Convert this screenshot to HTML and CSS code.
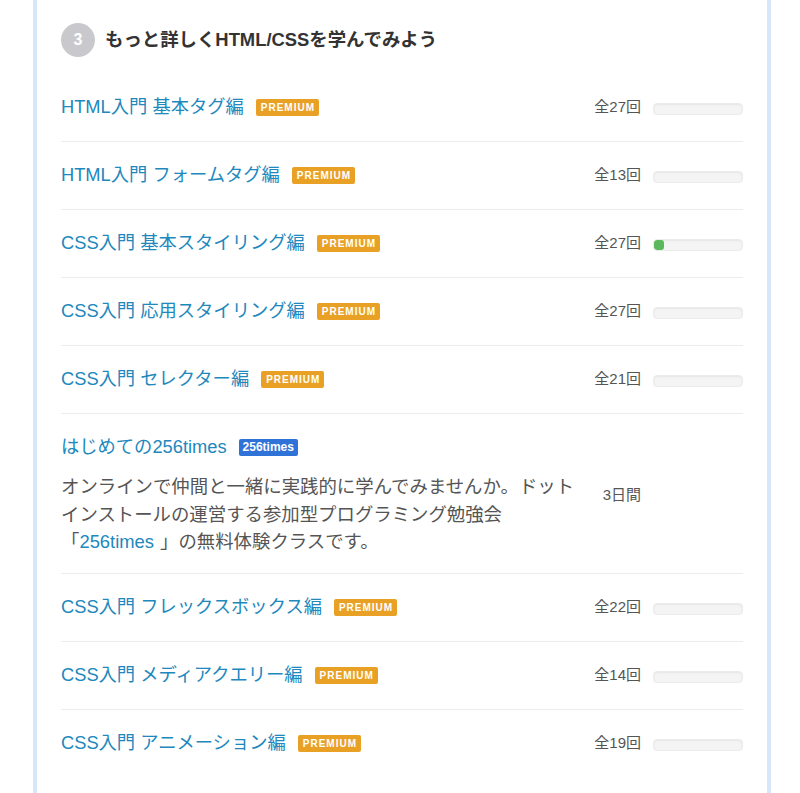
FILE: index.html
```html
<!DOCTYPE html>
<html lang="ja">
<head>
<meta charset="utf-8">
<title>もっと詳しくHTML/CSSを学んでみよう</title>
<link rel="stylesheet" href="styles.css">
</head>
<body>
<section class="course-card">
  <h2 class="step-heading"><span class="step-num">3</span><span class="step-title">もっと詳しくHTML/CSSを学んでみよう</span></h2>
  <ul class="lesson-list">
    <li class="lesson">
      <div class="lesson-main"><a class="lesson-title" href="#">HTML入門 基本タグ編</a><span class="badge badge-premium">PREMIUM</span></div>
      <div class="lesson-meta"><span class="count">全27回</span><span class="progress"></span></div>
    </li>
    <li class="lesson">
      <div class="lesson-main"><a class="lesson-title" href="#">HTML入門 フォームタグ編</a><span class="badge badge-premium">PREMIUM</span></div>
      <div class="lesson-meta"><span class="count">全13回</span><span class="progress"></span></div>
    </li>
    <li class="lesson">
      <div class="lesson-main"><a class="lesson-title" href="#">CSS入門 基本スタイリング編</a><span class="badge badge-premium">PREMIUM</span></div>
      <div class="lesson-meta"><span class="count">全27回</span><span class="progress"><span class="progress-fill" style="width: 10px"></span></span></div>
    </li>
    <li class="lesson">
      <div class="lesson-main"><a class="lesson-title" href="#">CSS入門 応用スタイリング編</a><span class="badge badge-premium">PREMIUM</span></div>
      <div class="lesson-meta"><span class="count">全27回</span><span class="progress"></span></div>
    </li>
    <li class="lesson">
      <div class="lesson-main"><a class="lesson-title" href="#">CSS入門 セレクター編</a><span class="badge badge-premium">PREMIUM</span></div>
      <div class="lesson-meta"><span class="count">全21回</span><span class="progress"></span></div>
    </li>
    <li class="lesson lesson-event">
      <div class="lesson-main">
        <div class="lesson-head"><a class="lesson-title" href="#">はじめての256times</a><span class="badge badge-event">256times</span></div>
        <p class="lesson-desc">オンラインで仲間と一緒に実践的に学んでみませんか。ドットインストールの運営する参加型プログラミング勉強会<span class="quoted">「<a class="desc-link" href="#">256times</a>」</span>の無料体験クラスです。</p>
      </div>
      <div class="lesson-meta"><span class="count">3日間</span><span class="progress-slot"></span></div>
    </li>
    <li class="lesson">
      <div class="lesson-main"><a class="lesson-title" href="#">CSS入門 フレックスボックス編</a><span class="badge badge-premium">PREMIUM</span></div>
      <div class="lesson-meta"><span class="count">全22回</span><span class="progress"></span></div>
    </li>
    <li class="lesson">
      <div class="lesson-main"><a class="lesson-title" href="#">CSS入門 メディアクエリー編</a><span class="badge badge-premium">PREMIUM</span></div>
      <div class="lesson-meta"><span class="count">全14回</span><span class="progress"></span></div>
    </li>
    <li class="lesson">
      <div class="lesson-main"><a class="lesson-title" href="#">CSS入門 アニメーション編</a><span class="badge badge-premium">PREMIUM</span></div>
      <div class="lesson-meta"><span class="count">全19回</span><span class="progress"></span></div>
    </li>
  </ul>
</section>
</body>
</html>
```
FILE: styles.css
```css
* {
  box-sizing: border-box;
}

html, body {
  margin: 0;
  padding: 0;
  background: #ffffff;
}

body {
  font-family: "Liberation Sans", "Noto Sans CJK JP", sans-serif;
  color: #444;
  overflow: hidden;
}

.course-card {
  margin-left: 33px;
  width: 738px;
  min-height: 793px;
  background: #fff;
  border-left: 4px solid #d6e7f8;
  border-right: 4px solid #d6e7f8;
  padding: 23px 24px 0;
}

/* step heading */
.step-heading {
  display: flex;
  align-items: center;
  margin: 0;
  height: 34px;
}

.step-num {
  width: 34px;
  height: 34px;
  border-radius: 50%;
  background: #c9c9cd;
  color: #fff;
  font-size: 16px;
  font-weight: bold;
  display: flex;
  align-items: center;
  justify-content: center;
  flex: none;
}

.step-title {
  margin-left: 10px;
  font-size: 18.4px;
  font-weight: bold;
  color: #333;
  line-height: 24px;
}

/* lesson list */
.lesson-list {
  list-style: none;
  margin: 17px 0 0;
  padding: 0;
}

.lesson {
  display: flex;
  align-items: center;
  padding: 21px 0 22px;
  border-bottom: 1px solid #ececec;
}

.lesson:last-child {
  border-bottom: none;
}

.lesson-event {
  padding-bottom: 17.5px;
}

.lesson-main {
  flex: 1;
  display: flex;
  align-items: center;
  min-width: 0;
}

.lesson-event .lesson-main {
  display: block;
}

.lesson-head {
  display: flex;
  align-items: center;
}

.lesson-title {
  font-size: 18.3px;
  line-height: 24px;
  color: #2188bd;
  text-decoration: none;
}

.badge {
  display: inline-block;
  margin-left: 12px;
  height: 17px;
  line-height: 17px;
  color: #fff;
  font-weight: bold;
  border-radius: 2px;
}

.badge-premium {
  background: #e9a125;
  font-size: 10px;
  letter-spacing: 1px;
  padding: 0 4px 0 5px;
}

.badge-event {
  background: #2f72d8;
  font-size: 12px;
  padding: 0 4px;
}

.lesson-desc {
  margin: 14px 0 0;
  width: 530px;
  font-size: 18.4px;
  line-height: 27.5px;
  color: #555;
}

.quoted {
  white-space: nowrap;
}

.desc-link {
  color: #2188bd;
  text-decoration: none;
  padding-right: 6px;
}

/* right-hand meta */
.lesson-meta {
  display: flex;
  align-items: center;
  flex: none;
}

.count {
  font-size: 15px;
  color: #555;
  line-height: 20px;
}

.progress,
.progress-slot {
  display: block;
  width: 90px;
  height: 12px;
  margin-left: 12px;
}

.progress {
  background: #f4f4f4;
  border: 1px solid #ebebeb;
  border-radius: 4px;
  box-shadow: inset 0 1px 2px rgba(0, 0, 0, 0.06);
  overflow: hidden;
  margin-top: 3px;
}

.progress-fill {
  display: block;
  height: 100%;
  background: #5cb85c;
  border-radius: 3px;
}
```
